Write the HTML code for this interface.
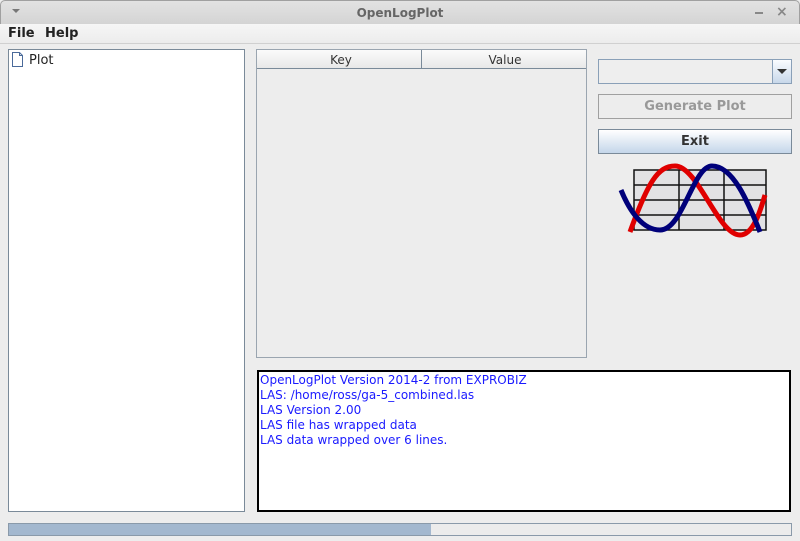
<!DOCTYPE html>
<html><head><style>
body{margin:0;width:800px;height:541px;background:#ededed;font-family:"DejaVu Sans","Liberation Sans",sans-serif;position:relative;overflow:hidden}
.a{position:absolute;box-sizing:border-box}
</style></head><body>
<div class="a" style="left:0;top:0;width:800px;height:24px;background:linear-gradient(#e2e2e2,#d4d4d4);border:1px solid #a0a0a0;border-bottom:none;border-radius:5px 5px 0 0"></div>
<div class="a" style="left:12px;top:9px;width:0;height:0;border-left:4px solid transparent;border-right:4px solid transparent;border-top:4px solid #777"></div>
<div class="a" style="left:0;top:6px;width:800px;text-align:center;font-size:12px;font-weight:bold;color:#666">OpenLogPlot</div>
<div class="a" style="left:755px;top:12px;width:8px;height:2px;background:#888"></div>
<div class="a" style="left:776px;top:4px;font-size:14px;color:#888;font-weight:bold">×</div>
<div class="a" style="left:0;top:24px;width:800px;height:20px;background:linear-gradient(#f6f6f6,#ececec);border-bottom:1px solid #d0d0d0"></div>
<div class="a" style="left:8px;top:26px;font-size:13px;font-weight:bold;color:#222">File</div>
<div class="a" style="left:45px;top:26px;font-size:13px;font-weight:bold;color:#222">Help</div>
<div class="a" style="left:8px;top:49px;width:237px;height:463px;background:#fff;border:1px solid #7a8a99"></div>
<svg class="a" style="left:11px;top:52px" width="13" height="16"><path d="M1.5 .5h7l3 3v11h-10z M8.5 .5v3h3" fill="#fff" stroke="#4a6a9a"/></svg>
<div class="a" style="left:29px;top:53px;font-size:13px;color:#222">Plot</div>
<div class="a" style="left:256px;top:49px;width:331px;height:309px;border:1px solid #9aa5b0;background:#ededed"></div>
<div class="a" style="left:257px;top:50px;width:329px;height:19px;background:linear-gradient(#fbfbfb,#e8e8e8);border-bottom:1px solid #7a8a99"></div>
<div class="a" style="left:421px;top:50px;width:1px;height:19px;background:#7a8a99"></div>
<div class="a" style="left:259px;top:53px;width:164px;text-align:center;font-size:12px;color:#333">Key</div>
<div class="a" style="left:423px;top:53px;width:164px;text-align:center;font-size:12px;color:#333">Value</div>
<div class="a" style="left:598px;top:59px;width:194px;height:25px;border:1px solid #8aa0b8;background:#eeeeee"></div>
<div class="a" style="left:772px;top:60px;width:19px;height:23px;border-left:1px solid #8aa0b8;background:linear-gradient(#fafcff,#c8d8ea)"></div>
<div class="a" style="left:777px;top:69px;width:0;height:0;border-left:5px solid transparent;border-right:5px solid transparent;border-top:5px solid #333"></div>
<div class="a" style="left:598px;top:94px;width:194px;height:25px;border:1px solid #a0a0a0;text-align:center;font-size:13px;font-weight:bold;color:#999;line-height:24px">Generate Plot</div>
<div class="a" style="left:598px;top:129px;width:194px;height:25px;border:1px solid #7a8a99;background:linear-gradient(#ffffff,#c4d6ea);text-align:center;font-size:13px;font-weight:bold;color:#333;line-height:24px">Exit</div>
<svg class="a" style="left:618px;top:162px" width="155" height="76">
<rect x="16" y="8" width="132" height="60" fill="#e2e2e4" stroke="#111" stroke-width="1.5"/>
<path d="M16 23h132M16 38h132M16 53h132M61 8v60M106 8v60" stroke="#111" stroke-width="1.5"/>
<path d="M12 70 C30 20,40 4,57 4 C80 4,100 73,122 73 C135 73,142 50,147 33" fill="none" stroke="#e00000" stroke-width="5"/>
<path d="M3 28 C12 50,25 68,42 68 C65 68,75 4,94 4 C115 4,130 40,142 70" fill="none" stroke="#00007a" stroke-width="5"/>
</svg>
<div class="a" style="left:257px;top:370px;width:534px;height:142px;background:#fff;border:2px solid #000;padding:1px 0 0 1px;font-size:12px;line-height:15px;color:#1a1aff">OpenLogPlot Version 2014-2 from EXPROBIZ<br>LAS: /home/ross/ga-5_combined.las<br>LAS Version 2.00<br>LAS file has wrapped data<br>LAS data wrapped over 6 lines.</div>
<div class="a" style="left:8px;top:523px;width:784px;height:13px;border:1px solid #8a9aaa;background:#ececec"></div>
<div class="a" style="left:9px;top:524px;width:422px;height:11px;background:#a3b8cf"></div>
</body></html>
